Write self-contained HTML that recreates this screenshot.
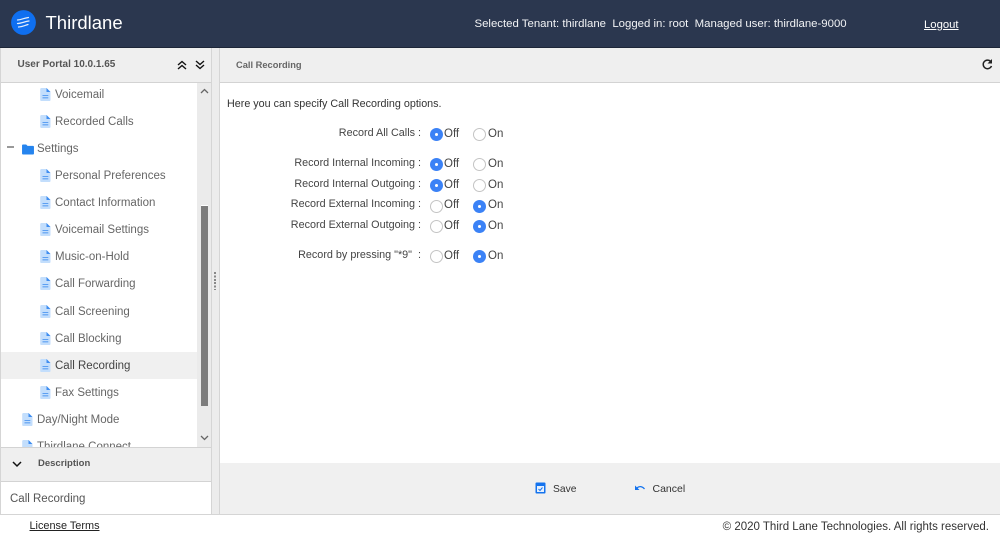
<!DOCTYPE html>
<html><head><meta charset="utf-8">
<style>
*{box-sizing:border-box}
html,body{margin:0;padding:0;width:1000px;height:537px;overflow:hidden;background:#fff;font-family:"Liberation Sans",sans-serif;color:#333}
.a{position:absolute;white-space:nowrap}
.t{font-size:11.5px;line-height:16px;color:#666}
.r{position:absolute;width:13px;height:13px;border-radius:50%;border:1px solid #c4c4c4;background:#fff}
.r.c{background:#3b82f6;border:0}
.r.c:after{content:"";position:absolute;left:5px;top:5px;width:3px;height:3px;border-radius:50%;background:#fff}
.l{position:absolute;font-size:10.8px;line-height:14px;color:#444;text-align:right;right:579px;white-space:nowrap}
.o{position:absolute;font-size:11.5px;line-height:14px;color:#444}
svg{position:absolute;display:block}
</style></head><body>
<svg width="0" height="0" style="position:absolute"><defs>
<symbol id="doc" viewBox="0 0 11 13"><path d="M1.500 0H6.500L10.500 4V11.700A1.300 1.300 0 0 1 9.200 13H1.500A1.300 1.300 0 0 1 .200 11.700V1.300A1.300 1.300 0 0 1 1.500 0Z" fill="#c3defc"/><path d="M6.500 0L10.500 4H6.500Z" fill="#3f8df0"/><path d="M2.500 7.500H8.300M2.500 9.800H8.300" stroke="#5c9ff2" stroke-width="1.100"/></symbol>
</defs></svg>

<!-- header -->
<div class="a" style="left:0;top:0;width:1000px;height:47px;background:#2b374f"></div>
<div class="a" style="left:0;top:47px;width:1000px;height:1px;background:#1d2638"></div>
<svg style="left:11px;top:10px" width="25" height="25" viewBox="0 0 25 25"><circle cx="12.500" cy="12.500" r="12.400" fill="#0f6ff0"/><path d="M6.500 10C10 10 13 8 17.500 7.500M6.500 13.500C10 13.500 14 11.500 18 11M7.500 17C11 17 14 15.500 17 14.500" stroke="#e3eefc" stroke-width="1.200" fill="none" stroke-linecap="round"/></svg>
<div class="a" style="left:45.500px;top:11px;font-size:18.500px;line-height:24px;color:#fff">Thirdlane</div>
<div class="a" style="left:474.500px;top:17px;font-size:11.400px;line-height:15px;color:#f2f3f5">Selected Tenant: thirdlane&nbsp; Logged in: root&nbsp; Managed user: thirdlane-9000</div>
<div class="a" style="left:924px;top:18px;font-size:11.300px;line-height:15px;color:#fff;text-decoration:underline">Logout</div>

<!-- left panel -->
<div class="a" style="left:0;top:48px;width:212px;height:467px;background:#fff;border-left:1px solid #d5d5d5;border-right:1px solid #d5d5d5"></div>
<div class="a" style="left:1px;top:48px;width:210px;height:35px;background:#efefef;border-bottom:1px solid #d3d3d3"></div>
<div class="a" style="left:17.500px;top:58px;font-size:10px;line-height:14px;font-weight:bold;color:#555">User Portal 10.0.1.65</div>
<svg style="left:176px;top:59px" width="12" height="12" viewBox="0 0 12 12"><path d="M2 6L6 2.500L10 6M2 10L6 6.500L10 10" stroke="#111" stroke-width="1.400" fill="none"/></svg>
<svg style="left:194px;top:59px" width="12" height="12" viewBox="0 0 12 12"><path d="M2 2L6 5.500L10 2M2 6L6 9.500L10 6" stroke="#111" stroke-width="1.400" fill="none"/></svg>

<!-- tree -->
<div class="a" style="left:1px;top:352px;width:196px;height:27px;background:#f0f0f0"></div>
<svg style="left:40px;top:88px" width="11" height="13"><use href="#doc"/></svg><div class="a t" style="left:55px;top:87px">Voicemail</div>
<svg style="left:40px;top:115px" width="11" height="13"><use href="#doc"/></svg><div class="a t" style="left:55px;top:114px">Recorded Calls</div>
<div class="a" style="left:7px;top:146px;width:7px;height:2px;background:#999"></div>
<svg style="left:21px;top:144px" width="14" height="11" viewBox="0 0 14 12"><path d="M.500 1.500A1 1 0 0 1 1.500 .500H5L6.500 2H12.500A1 1 0 0 1 13.500 3V10.500A1 1 0 0 1 12.500 11.500H1.500A1 1 0 0 1 .500 10.500Z" fill="#2584ee"/></svg>
<div class="a t" style="left:37px;top:141px">Settings</div>
<svg style="left:40px;top:169px" width="11" height="13"><use href="#doc"/></svg><div class="a t" style="left:55px;top:168px">Personal Preferences</div>
<svg style="left:40px;top:196px" width="11" height="13"><use href="#doc"/></svg><div class="a t" style="left:55px;top:195px">Contact Information</div>
<svg style="left:40px;top:223px" width="11" height="13"><use href="#doc"/></svg><div class="a t" style="left:55px;top:222px">Voicemail Settings</div>
<svg style="left:40px;top:250px" width="11" height="13"><use href="#doc"/></svg><div class="a t" style="left:55px;top:249px">Music-on-Hold</div>
<svg style="left:40px;top:277px" width="11" height="13"><use href="#doc"/></svg><div class="a t" style="left:55px;top:276px">Call Forwarding</div>
<svg style="left:40px;top:305px" width="11" height="13"><use href="#doc"/></svg><div class="a t" style="left:55px;top:304px">Call Screening</div>
<svg style="left:40px;top:332px" width="11" height="13"><use href="#doc"/></svg><div class="a t" style="left:55px;top:331px">Call Blocking</div>
<svg style="left:40px;top:359px" width="11" height="13"><use href="#doc"/></svg><div class="a t" style="left:55px;top:358px;color:#444">Call Recording</div>
<svg style="left:40px;top:386px" width="11" height="13"><use href="#doc"/></svg><div class="a t" style="left:55px;top:385px">Fax Settings</div>
<svg style="left:22px;top:413px" width="11" height="13"><use href="#doc"/></svg><div class="a t" style="left:37px;top:412px">Day/Night Mode</div>
<svg style="left:22px;top:440px" width="11" height="13"><use href="#doc"/></svg><div class="a t" style="left:37px;top:439px">Thirdlane Connect</div>

<!-- scrollbar -->
<div class="a" style="left:197px;top:83px;width:14px;height:364px;background:#ebebeb"></div>
<div class="a" style="left:201px;top:205px;width:7px;height:1px;background:#fff"></div>
<div class="a" style="left:201px;top:206px;width:7px;height:200px;background:#7d7d7d"></div>
<svg style="left:199px;top:87px" width="11" height="8" viewBox="0 0 11 8"><path d="M2 6L5.500 2.500L9 6" stroke="#666" stroke-width="1.300" fill="none"/></svg>
<svg style="left:199px;top:434px" width="11" height="8" viewBox="0 0 11 8"><path d="M2 2L5.500 5.500L9 2" stroke="#666" stroke-width="1.300" fill="none"/></svg>

<!-- description -->
<div class="a" style="left:1px;top:447px;width:210px;height:35px;background:#efefef;border-top:1px solid #d3d3d3;border-bottom:1px solid #d3d3d3"></div>
<svg style="left:11px;top:459px" width="12" height="10" viewBox="0 0 12 10"><path d="M2 3L6 7L10 3" stroke="#111" stroke-width="1.500" fill="none"/></svg>
<div class="a" style="left:38px;top:457px;font-size:9.500px;line-height:14px;font-weight:bold;color:#555">Description</div>
<div class="a t" style="left:10px;top:491px;color:#555">Call Recording</div>

<!-- splitter -->
<div class="a" style="left:212px;top:48px;width:7px;height:467px;background:#ececec"></div>
<div class="a" style="left:214px;top:272px;width:2px;height:18px;background:repeating-linear-gradient(#888 0 2px,transparent 2px 3.400px)"></div>

<!-- right panel -->
<div class="a" style="left:219px;top:48px;width:781px;height:467px;background:#fff;border-left:1px solid #d5d5d5"></div>
<div class="a" style="left:220px;top:48px;width:780px;height:35px;background:#efefef;border-bottom:1px solid #d3d3d3"></div>
<div class="a" style="left:236px;top:58px;font-size:9.300px;line-height:14px;font-weight:bold;color:#666">Call Recording</div>
<svg style="left:981px;top:58px" width="13" height="13" viewBox="0 0 13 13"><path d="M10.500 8A4.300 4.300 0 1 1 9.700 3.500" stroke="#222" stroke-width="1.500" fill="none"/><path d="M11 1V5.500H6.500Z" fill="#222"/></svg>
<div class="a" style="left:227px;top:97px;font-size:10.750px;line-height:14px;color:#333">Here you can specify Call Recording options.</div>

<div class="l" style="top:126px">Record All Calls :</div>
<div class="r c" style="left:430px;top:128px"></div><div class="o" style="left:444px;top:127px">Off</div>
<div class="r" style="left:473px;top:128px"></div><div class="o" style="left:488px;top:127px">On</div>

<div class="l" style="top:156px">Record Internal Incoming :</div>
<div class="r c" style="left:430px;top:158px"></div><div class="o" style="left:444px;top:157px">Off</div>
<div class="r" style="left:473px;top:158px"></div><div class="o" style="left:488px;top:157px">On</div>

<div class="l" style="top:177px">Record Internal Outgoing :</div>
<div class="r c" style="left:430px;top:179px"></div><div class="o" style="left:444px;top:178px">Off</div>
<div class="r" style="left:473px;top:179px"></div><div class="o" style="left:488px;top:178px">On</div>

<div class="l" style="top:197px">Record External Incoming :</div>
<div class="r" style="left:430px;top:200px"></div><div class="o" style="left:444px;top:198px">Off</div>
<div class="r c" style="left:473px;top:200px"></div><div class="o" style="left:488px;top:198px">On</div>

<div class="l" style="top:218px">Record External Outgoing :</div>
<div class="r" style="left:430px;top:220px"></div><div class="o" style="left:444px;top:219px">Off</div>
<div class="r c" style="left:473px;top:220px"></div><div class="o" style="left:488px;top:219px">On</div>

<div class="l" style="top:248px">Record by pressing "*9"&nbsp; :</div>
<div class="r" style="left:430px;top:250px"></div><div class="o" style="left:444px;top:249px">Off</div>
<div class="r c" style="left:473px;top:250px"></div><div class="o" style="left:488px;top:249px">On</div>

<!-- action bar -->
<div class="a" style="left:220px;top:463px;width:780px;height:51px;background:#f0f0f0"></div>
<div class="a" style="left:0;top:514px;width:1000px;height:1px;background:#d5d5d5"></div>
<svg style="left:535px;top:482px" width="11" height="12" viewBox="0 0 11 12"><rect x=".5" y=".5" width="10" height="11" rx="1" fill="#1473ee"/><rect x="2" y="4" width="7" height="6" fill="#e6f0fd"/><path d="M3.500 7L5 8.500L7.500 5.500" stroke="#1473ee" stroke-width="1" fill="none"/></svg>
<div class="a" style="left:553px;top:483px;font-size:10.300px;line-height:14px;color:#333">Save</div>
<svg style="left:634px;top:483px" width="12" height="10" viewBox="0 0 12 10"><path d="M3 5C5 3 8 3 10.500 6" stroke="#1473ee" stroke-width="1.300" fill="none"/><path d="M1 2.500V7H5.500Z" fill="#1473ee"/></svg>
<div class="a" style="left:652.500px;top:482px;font-size:10.500px;line-height:14px;color:#333">Cancel</div>

<!-- footer -->
<div class="a" style="left:29.500px;top:519px;font-size:10.900px;line-height:14px;color:#222;text-decoration:underline">License Terms</div>
<div class="a" style="right:11px;top:520px;font-size:11.500px;line-height:15px;color:#333">© 2020 Third Lane Technologies. All rights reserved.</div>
</body></html>
